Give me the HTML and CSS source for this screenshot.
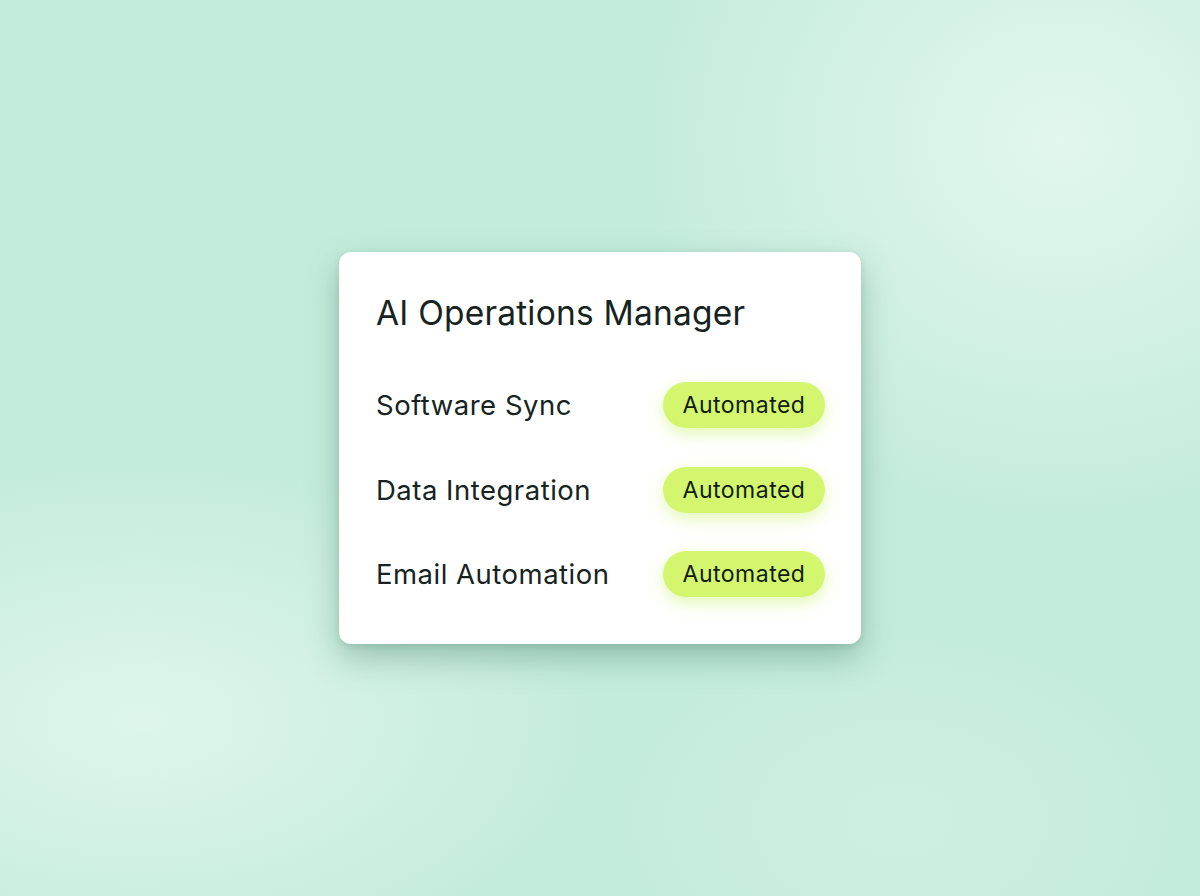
FILE: index.html
```html
<!DOCTYPE html>
<html lang="en">

<head>
    <meta charset="UTF-8">
    <meta name="viewport" content="width=device-width, initial-scale=1.0">
    <title>AI Operations Manager</title>
    <link rel="stylesheet" href="styles.css">
</head>

<body>
    <div class="card">
        <h2 class="card-title">AI Operations Manager</h2>

        <div class="task-list">
            <div class="task-row">
                <span class="task-name">Software Sync</span>
                <span class="badge">Automated</span>
            </div>
            <div class="task-row">
                <span class="task-name">Data Integration</span>
                <span class="badge">Automated</span>
            </div>
            <div class="task-row">
                <span class="task-name">Email Automation</span>
                <span class="badge">Automated</span>
            </div>
        </div>
    </div>
</body>

</html>
```

FILE: styles.css
```css
html, body {
    height: 100%;
}

body {
    font-family: 'Inter', 'Noto Sans', sans-serif;
    margin: 0;
    display: flex;
    align-items: center;
    justify-content: center;
    background-color: #c4ecdb;
    background-image:
        radial-gradient(ellipse 420px 380px at 1060px 140px, #e2f7ee 0%, rgba(226, 247, 238, 0) 100%),
        radial-gradient(ellipse 460px 260px at 140px 720px, #def6eb 0%, rgba(222, 246, 235, 0) 100%),
        radial-gradient(ellipse 300px 200px at 900px 820px, #cdefe1 0%, rgba(205, 239, 225, 0) 100%);
}

.card {
    width: 522px;
    height: 392px;
    box-sizing: border-box;
    background-color: #ffffff;
    border-radius: 12px;
    padding: 37px 36px 0 37px;
    box-shadow: 0 14px 32px rgba(50, 105, 85, 0.35), 0 2px 6px rgba(50, 105, 85, 0.15);
}

.card-title {
    margin: 0;
    font-size: 33.5px;
    font-weight: 400;
    color: #17231f;
    line-height: 48px;
    letter-spacing: 0.2px;
}

.task-list {
    display: flex;
    flex-direction: column;
    gap: 38.5px;
    margin-top: 45px;
}

.task-row {
    display: flex;
    align-items: center;
    justify-content: space-between;
    height: 46px;
}

.task-name {
    font-size: 27.5px;
    color: #17231f;
    letter-spacing: 0.5px;
}

.badge {
    display: inline-flex;
    align-items: center;
    justify-content: center;
    width: 162px;
    height: 46px;
    box-sizing: border-box;
    border-radius: 23px;
    background-color: #d4f56e;
    color: #111c15;
    font-size: 23px;
    letter-spacing: 0.5px;
    box-shadow: 0 6px 16px rgba(196, 240, 90, 0.45);
}
```
